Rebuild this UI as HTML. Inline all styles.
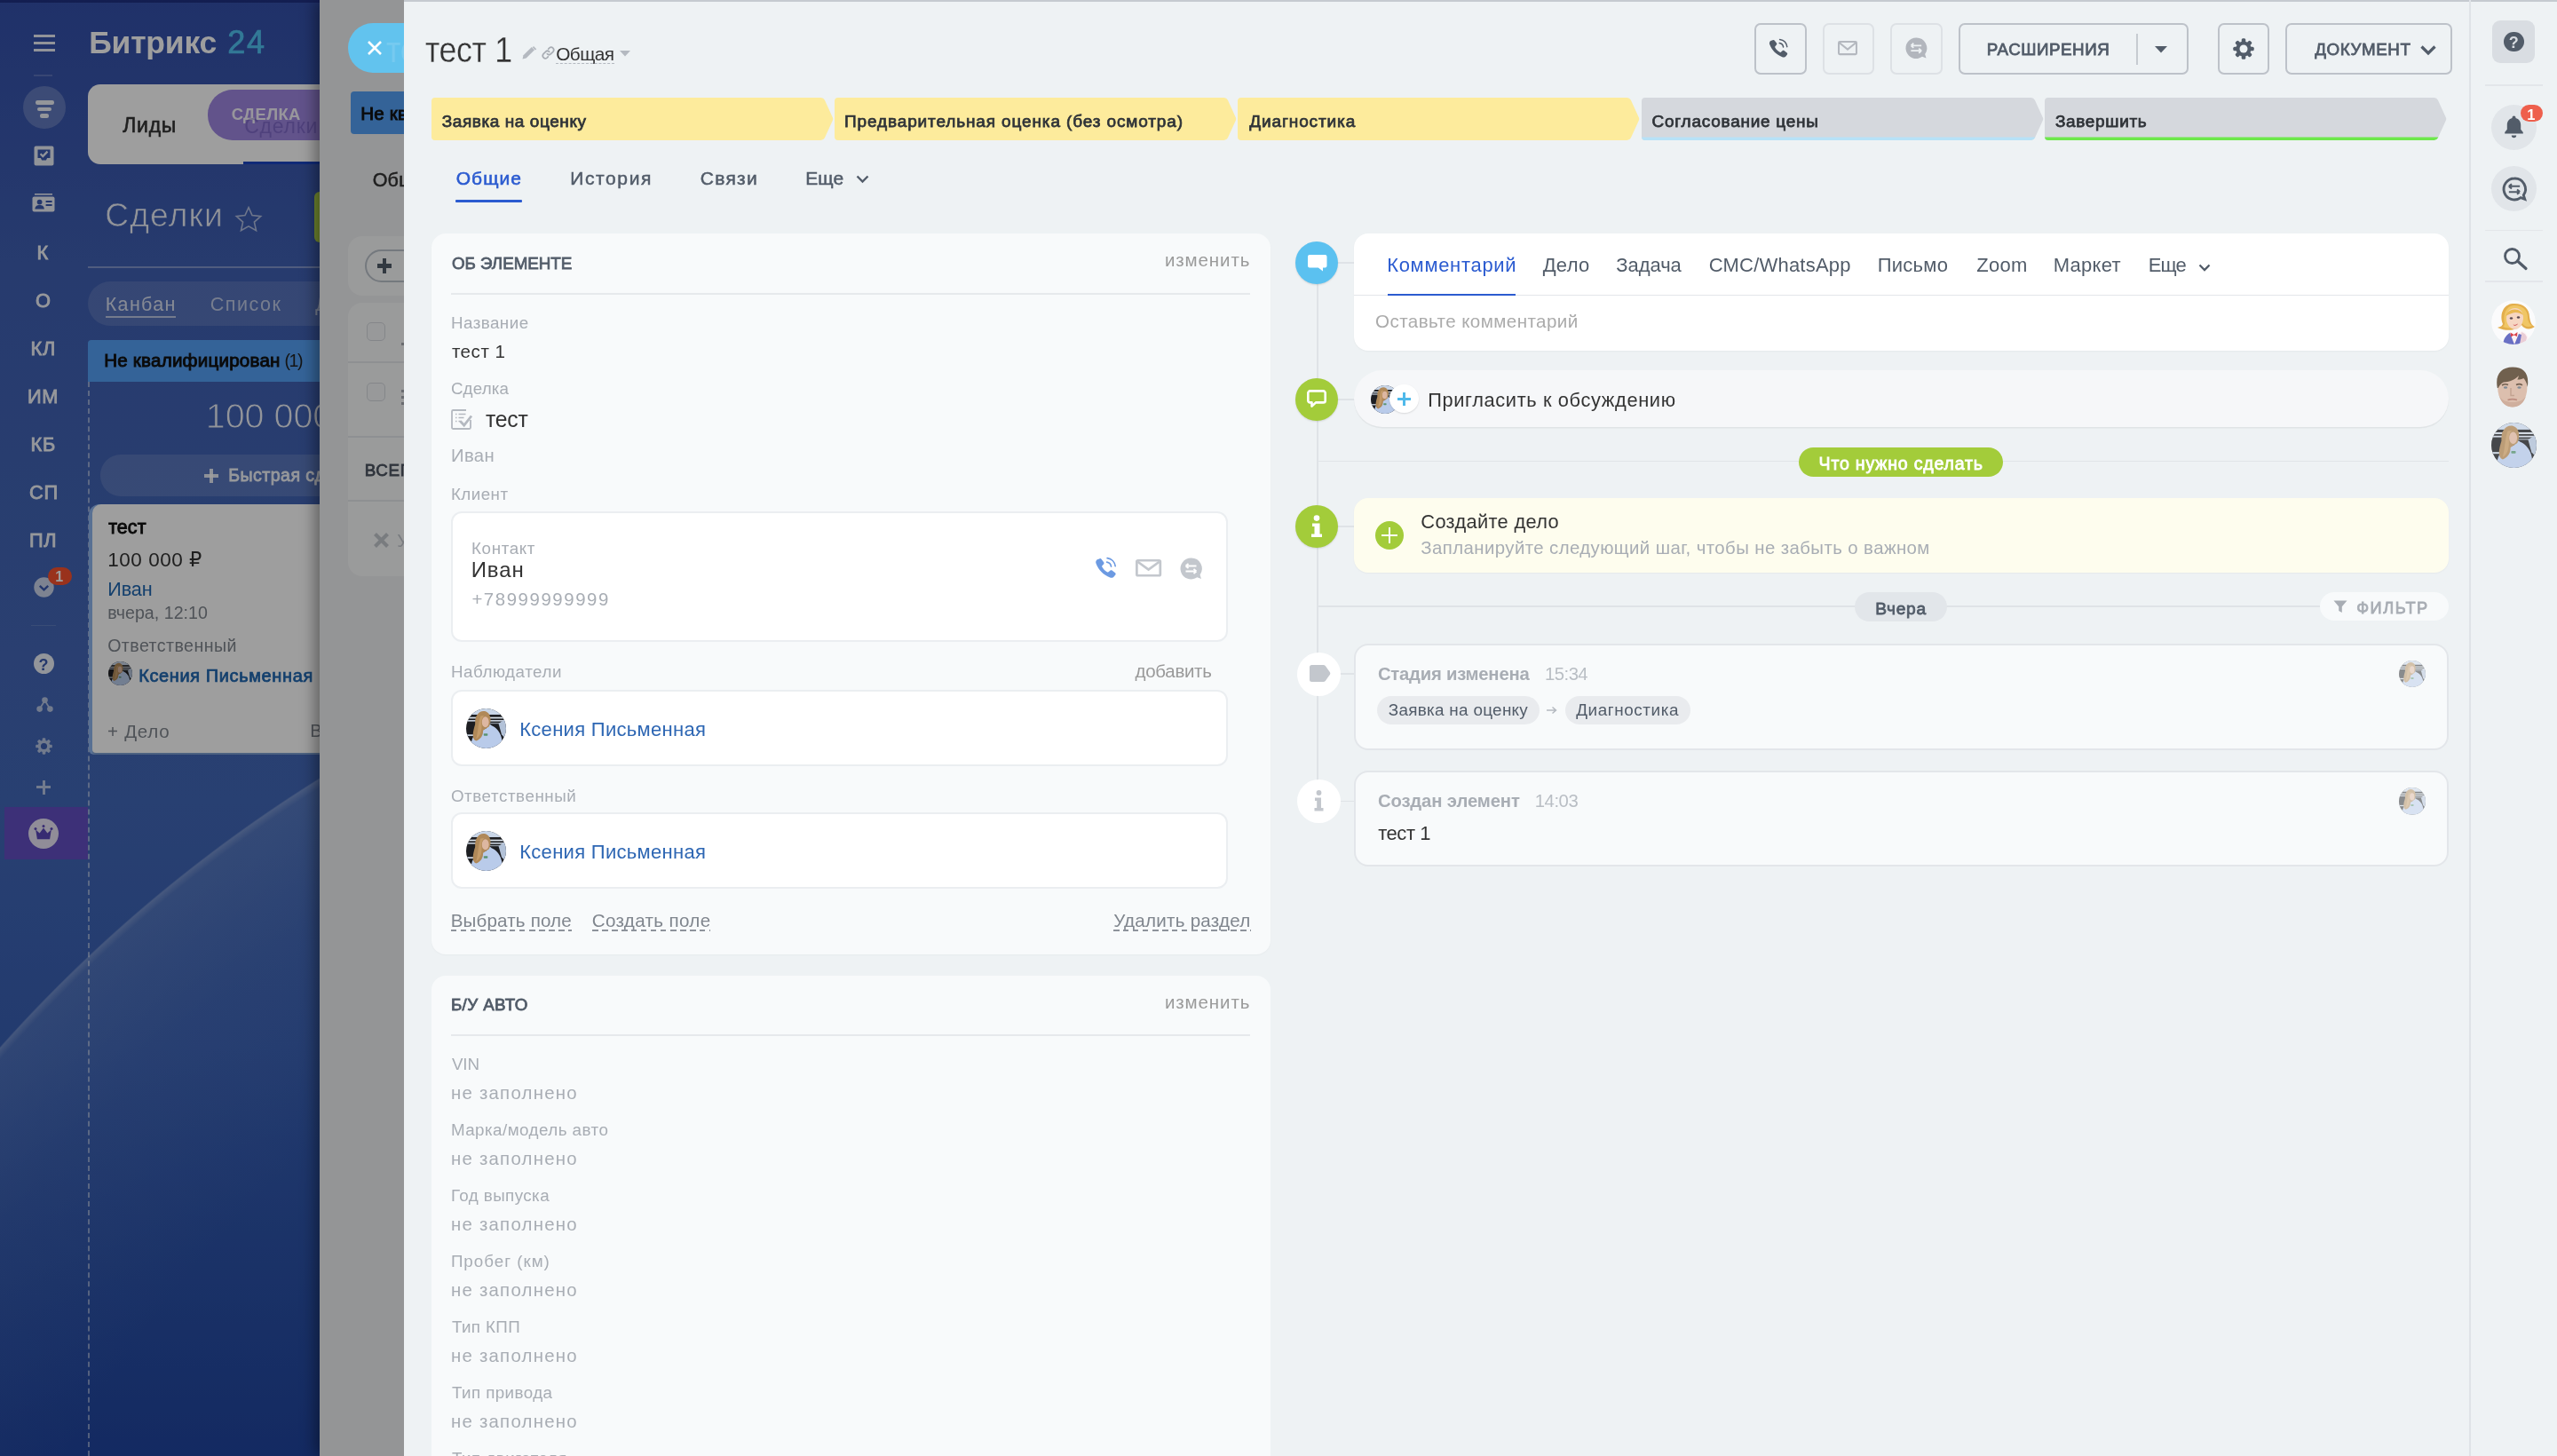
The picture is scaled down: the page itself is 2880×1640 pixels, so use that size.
<!DOCTYPE html>
<html lang="ru"><head><meta charset="utf-8"><title>тест 1</title>
<style>
html,body{margin:0;padding:0}
body{width:2880px;height:1640px;overflow:hidden;position:relative;background:#eef2f4;font-family:"Liberation Sans",sans-serif;}
#r{position:absolute;left:0;top:0;width:2880px;height:1640px;overflow:hidden;will-change:transform}
.a{position:absolute;display:block}
.t{position:absolute;white-space:nowrap;line-height:1;display:block}
svg{overflow:visible}
</style></head>
<body>
<div id="r">
<div class="a" style="left:0px;top:0px;width:470px;height:1640px;background:linear-gradient(180deg,#3450aa 0%,#3f5fb2 18%,#4467b6 45%,#4268b8 55%,#385fb3 72%,#2a50a6 88%,#20449e 100%);"></div>
<div class="a" style="left:-422px;top:625px;width:3318px;height:3318px;border-radius:50%;background:radial-gradient(circle closest-side,rgba(120,150,210,0) 0,rgba(120,150,210,0) 80%,rgba(140,165,215,.10) 92%,rgba(150,175,220,.22) 99.4%,rgba(190,205,235,.40) 99.9%,rgba(190,205,235,0) 100%)"></div>
<div class="a" style="left:38px;top:39px;width:24px;height:3px;background:rgba(255,255,255,.9);"></div>
<div class="a" style="left:38px;top:47px;width:24px;height:3px;background:rgba(255,255,255,.9);"></div>
<div class="a" style="left:38px;top:54.5px;width:24px;height:3px;background:rgba(255,255,255,.9);"></div>
<div class="a" style="left:38px;top:84px;width:21px;height:2px;background:rgba(255,255,255,.18);"></div>
<span class="t" style="left:100.2px;top:30.6px;font-size:35.5px;font-weight:700;color:#fff;letter-spacing:-0.20px;">Битрикс</span>
<span class="t" style="left:256.2px;top:30.2px;font-size:36px;color:#52c3f3;letter-spacing:1.80px;-webkit-text-stroke:.7px #52c3f3;">24</span>
<div class="a" style="left:26px;top:97px;width:48px;height:48px;background:rgba(255,255,255,.21);border-radius:24px;"></div>
<div class="a" style="left:39.5px;top:113.2px;width:21.5px;height:4.4px;background:rgba(255,255,255,.9);border-radius:2.2px;"></div>
<div class="a" style="left:42.3px;top:120.8px;width:15.8px;height:4.4px;background:rgba(255,255,255,.9);border-radius:2.2px;"></div>
<div class="a" style="left:45.3px;top:128.2px;width:9.6px;height:4.4px;background:rgba(255,255,255,.9);border-radius:2.2px;"></div>
<svg class="a" style="left:38px;top:164px;" width="23" height="23" viewBox="0 0 23 23"><path d="M2.5 0.5h18a2 2 0 0 1 2 2v18a2 2 0 0 1-2 2h-18a2 2 0 0 1-2-2v-18a2 2 0 0 1 2-2z" fill="rgba(255,255,255,.9)"/><path d="M4.5 4.5h14v9.5h-3.4l-1.2 2.6h-4.8l-1.2-2.6H4.5z" fill="#3b5aae"/><path d="M7.6 9.3l2.7 2.7 5.2-5.4" fill="none" stroke="rgba(255,255,255,.9)" stroke-width="2.3"/></svg>
<svg class="a" style="left:36px;top:218px;" width="26" height="21" viewBox="0 0 26 21"><rect x="3" y="0" width="20" height="1.6" fill="rgba(255,255,255,.9)"/><rect x="0.5" y="3.4" width="25" height="17" rx="2" fill="rgba(255,255,255,.9)"/><circle cx="8.6" cy="9.6" r="2.9" fill="#3b5aae"/><path d="M3.4 17.6c0-3.2 2.3-4.6 5.2-4.6s5.2 1.4 5.2 4.6z" fill="#3b5aae"/><rect x="15.6" y="8" width="7" height="2" fill="#3b5aae"/><rect x="15.6" y="12" width="7" height="2" fill="#3b5aae"/></svg>
<span class="t" style="left:41.6px;top:273.7px;font-size:21.8px;color:rgba(255,255,255,.9);letter-spacing:.6px;-webkit-text-stroke:.8px rgba(255,255,255,.9);">К</span>
<span class="t" style="left:40.1px;top:327.7px;font-size:21.8px;color:rgba(255,255,255,.9);letter-spacing:.6px;-webkit-text-stroke:.8px rgba(255,255,255,.9);">О</span>
<span class="t" style="left:34.6px;top:381.7px;font-size:21.8px;color:rgba(255,255,255,.9);letter-spacing:.6px;-webkit-text-stroke:.8px rgba(255,255,255,.9);">КЛ</span>
<span class="t" style="left:31.1px;top:435.9px;font-size:21.8px;color:rgba(255,255,255,.9);letter-spacing:.6px;-webkit-text-stroke:.8px rgba(255,255,255,.9);">ИМ</span>
<span class="t" style="left:34.6px;top:490.0px;font-size:21.8px;color:rgba(255,255,255,.9);letter-spacing:.6px;-webkit-text-stroke:.8px rgba(255,255,255,.9);">КБ</span>
<span class="t" style="left:33.1px;top:544.3px;font-size:21.8px;color:rgba(255,255,255,.9);letter-spacing:.6px;-webkit-text-stroke:.8px rgba(255,255,255,.9);">СП</span>
<span class="t" style="left:33.1px;top:597.8px;font-size:21.8px;color:rgba(255,255,255,.9);letter-spacing:.6px;-webkit-text-stroke:.8px rgba(255,255,255,.9);">ПЛ</span>
<svg class="a" style="left:38px;top:650px;" width="23" height="23" viewBox="0 0 23 23"><circle cx="11.5" cy="11.5" r="11.2" fill="rgba(255,255,255,.72)"/><path d="M6.8 9.8l4.7 4.6 4.7-4.6" fill="none" stroke="#3b5aae" stroke-width="2.4"/></svg>
<div class="a" style="left:54px;top:639px;width:27px;height:19.5px;background:#f7522e;border-radius:10px;"></div>
<span class="t" style="left:62.3px;top:642.2px;font-size:16px;font-weight:700;color:#fff;">1</span>
<div class="a" style="left:35px;top:703.5px;width:28px;height:1.5px;background:rgba(255,255,255,.14);"></div>
<div class="a" style="left:37.5px;top:735.5px;width:23px;height:23px;background:rgba(255,255,255,.9);border-radius:12px;"></div>
<span class="t" style="left:43.5px;top:740.0px;font-size:18px;font-weight:700;color:#3b5aae;">?</span>
<svg class="a" style="left:41px;top:785px;opacity:.62;" width="19" height="18" viewBox="0 0 19 18"><g fill="#fff"><circle cx="9.5" cy="3.6" r="3.3"/><circle cx="3.6" cy="13.6" r="3.3"/><circle cx="15.4" cy="13.6" r="3.3"/></g><path d="M9.5 4l-5.9 9.6M9.5 4l5.9 9.6" stroke="#fff" stroke-width="1.8"/></svg>
<svg class="a" style="left:40px;top:831px;opacity:.62;" width="19" height="19" viewBox="0 0 24 24"><rect x="9.7" y="0.3" width="4.6" height="23.4" rx="1.5" fill="#fff" transform="rotate(0 12 12)"/><rect x="9.7" y="0.3" width="4.6" height="23.4" rx="1.5" fill="#fff" transform="rotate(45 12 12)"/><rect x="9.7" y="0.3" width="4.6" height="23.4" rx="1.5" fill="#fff" transform="rotate(90 12 12)"/><rect x="9.7" y="0.3" width="4.6" height="23.4" rx="1.5" fill="#fff" transform="rotate(135 12 12)"/><circle cx="12" cy="12" r="8.6" fill="#fff"/><circle cx="12" cy="12" r="4.5" fill="#3b5aae"/></svg>
<div class="a" style="left:41px;top:885px;width:16px;height:3px;background:rgba(255,255,255,.62);"></div>
<div class="a" style="left:47.5px;top:878.5px;width:3px;height:6.5px;background:rgba(255,255,255,.62);"></div>
<div class="a" style="left:47.5px;top:888px;width:3px;height:6.5px;background:rgba(255,255,255,.62);"></div>
<div class="a" style="left:5px;top:908.5px;width:94px;height:59px;background:#634ec2;"></div>
<svg class="a" style="left:32px;top:922px;" width="34" height="34" viewBox="0 0 34 34"><circle cx="17" cy="17" r="17" fill="rgba(255,255,255,.85)"/><path d="M8.2 12.6l4.4 4 4.4-6.2 4.4 6.2 4.4-4-1.7 10.6H9.9z" fill="#5a46b8"/><circle cx="8" cy="11.4" r="1.5" fill="#5a46b8"/><circle cx="17" cy="8.6" r="1.5" fill="#5a46b8"/><circle cx="26" cy="11.4" r="1.5" fill="#5a46b8"/></svg>
<div class="a" style="left:99px;top:430px;width:0;height:1210px;border-left:2px dashed rgba(255,255,255,.45)"></div>
<div class="a" style="left:99px;top:95px;width:300px;height:89.5px;background:#fff;border-radius:14px 0 0 14px;"></div>
<span class="t" style="left:138.2px;top:130.4px;font-size:23px;color:#333;letter-spacing:0.77px;-webkit-text-stroke:.6px #333;">Лиды</span>
<div class="a" style="left:234px;top:101px;width:200px;height:56.8px;background:#9e86e0;border-radius:28px 0 0 28px;"></div>
<span class="t" style="left:260.7px;top:120.2px;font-size:18.4px;font-weight:700;color:rgba(255,255,255,.9);letter-spacing:0.36px;">СДЕЛКА</span>
<span class="t" style="left:275.2px;top:130.7px;font-size:23px;color:rgba(60,40,150,.3);letter-spacing:0.76px;">Сделки</span>
<div class="a" style="left:274px;top:182px;width:100px;height:3px;background:#1a45c0;"></div>
<span class="t" style="left:118.2px;top:224.4px;font-size:37.2px;color:rgba(255,255,255,.9);letter-spacing:1.16px;-webkit-text-stroke:.7px #3c5db1;">Сделки</span>
<svg class="a" style="left:264px;top:231px;" width="32" height="31" viewBox="0 0 32 31"><path d="M16 2.6l4 9 9.7 1-7.3 6.5 2.1 9.6L16 23.8l-8.5 4.9 2.1-9.6L2.3 12.6l9.7-1z" fill="none" stroke="rgba(255,255,255,.6)" stroke-width="1.6"/></svg>
<div class="a" style="left:354px;top:215.5px;width:40px;height:57px;background:#b5d94c;border-radius:6px 0 0 6px;"></div>
<div class="a" style="left:99px;top:300px;width:300px;height:2px;background:rgba(255,255,255,.35);"></div>
<div class="a" style="left:99px;top:316.5px;width:330px;height:50px;background:rgba(255,255,255,.12);border-radius:25px 0 0 25px;"></div>
<span class="t" style="left:118.7px;top:333.0px;font-size:21.5px;color:rgba(255,255,255,.78);letter-spacing:1.36px;">Канбан</span>
<div class="a" style="left:119px;top:356px;width:78.5px;height:2px;background:rgba(255,255,255,.6);"></div>
<span class="t" style="left:236.7px;top:333.0px;font-size:21.5px;color:rgba(255,255,255,.62);letter-spacing:1.56px;">Список</span>
<span class="t" style="left:355.2px;top:333.0px;font-size:21.5px;color:rgba(255,255,255,.62);">Д</span>
<div class="a" style="left:99px;top:382.5px;width:300px;height:47.5px;background:#55a1f5;border-radius:4px 0 0 0;"></div>
<span class="t" style="left:117.2px;top:396.0px;font-size:20.6px;color:#111;letter-spacing:0.21px;-webkit-text-stroke:.9px #111;">Не квалифицирован</span>
<span class="t" style="left:320.4px;top:396.8px;font-size:19.6px;color:#222;letter-spacing:-1.40px;">(1)</span>
<span class="t" style="left:231.7px;top:449.0px;font-size:39.5px;color:rgba(255,255,255,.9);letter-spacing:-0.03px;-webkit-text-stroke:1px #4162b2;">100 000</span>
<div class="a" style="left:113px;top:512px;width:320px;height:46.5px;background:rgba(255,255,255,.13);border-radius:23px 0 0 23px;"></div>
<div class="a" style="left:229.5px;top:534px;width:16.5px;height:3.6px;background:rgba(255,255,255,.85);"></div>
<div class="a" style="left:236px;top:527.5px;width:3.6px;height:16.5px;background:rgba(255,255,255,.85);"></div>
<span class="t" style="left:257.2px;top:525.9px;font-size:19.6px;color:rgba(255,255,255,.86);letter-spacing:0.45px;-webkit-text-stroke:.8px rgba(255,255,255,.86);">Быстрая сделка</span>
<div class="a" style="left:100px;top:568px;width:300px;height:282px;background:#8fb5ee;border-radius:12px 0 0 6px;"></div>
<div class="a" style="left:103.6px;top:568px;width:300px;height:280px;background:#fff;border-radius:10px 0 0 4px;box-shadow:0 2px 0 rgba(0,0,0,.12);"></div>
<span class="t" style="left:122.2px;top:583.6px;font-size:21.4px;color:#111;letter-spacing:0.10px;-webkit-text-stroke:.9px #111;">тест</span>
<span class="t" style="left:121.2px;top:620.3px;font-size:22.5px;color:#333;letter-spacing:0.54px;font-family:'Liberation Sans','DejaVu Sans',sans-serif;">100 000 ₽</span>
<span class="t" style="left:121.2px;top:652.8px;font-size:21.6px;color:#2067b0;letter-spacing:-0.07px;">Иван</span>
<span class="t" style="left:121.2px;top:680.7px;font-size:19.6px;color:#80868e;letter-spacing:0.03px;">вчера, 12:10</span>
<span class="t" style="left:121.2px;top:717.9px;font-size:19.6px;color:#80868e;letter-spacing:0.44px;">Ответственный</span>
<svg class="a" style="left:122px;top:745px;border-radius:50%;overflow:hidden;" width="27" height="27" viewBox="0 0 40 40"><rect width="40" height="40" fill="#1d1e22"/><rect x="0" y="0" width="40" height="6.2" fill="#c9d6e8"/><rect x="0" y="8.6" width="40" height="1.5" fill="#dde5ee"/><rect x="0" y="11.6" width="40" height="1.4" fill="#cfd8e4"/><rect x="22" y="14.2" width="18" height="1.1" fill="#8c949f"/><path d="M32.500 15L40 10v21l-4.500-5z" fill="#b3c2d8"/><rect x="0" y="26" width="8" height="1.600" fill="#cbd5e2"/><path d="M4.500 40C5 30 8 24.500 14 22.500l6-2.500c1.500-4 4-5 5.500-3 5 2 9.500 7 10.500 15l1 8z" fill="#b9cbea"/><path d="M11 6.500C14 1.200 22 1.200 24 8c1 4 .2 7-1 10l-6 4c0 5-2 8.500-7 10.500-5-2-3-10-1-16.500 0-4 0-7 2-9.500z" fill="#b08959"/><ellipse cx="19.300" cy="13.600" rx="3.500" ry="5.300" fill="#ddb7a1"/><path d="M14.500 7.500C12 14 12.500 21 10 30.500c4-2 6-8 5.500-14.500-.4-4 .6-7 2.600-9z" fill="#c49b69"/><rect x="17.600" y="25" width="4" height="2.300" rx=".6" fill="#5a9372"/></svg>
<span class="t" style="left:156.2px;top:750.8px;font-size:20px;color:#2067b0;letter-spacing:0.61px;-webkit-text-stroke:.7px #2067b0;">Ксения Письменная</span>
<span class="t" style="left:121.0px;top:813.8px;font-size:20.5px;color:#80868e;letter-spacing:0.76px;">+ Дело</span>
<span class="t" style="left:349.2px;top:813.4px;font-size:20.5px;color:#80868e;">В</span>
<div class="a" style="left:360px;top:0px;width:200px;height:1640px;background:#eff0f2;box-shadow:-5px 0 16px rgba(0,0,0,.4);"></div>
<div class="a" style="left:395.3px;top:103.4px;width:100px;height:47.2px;background:#55a1f5;border-radius:4px 0 0 4px;"></div>
<span class="t" style="left:406.2px;top:117.9px;font-size:20.6px;color:#111;letter-spacing:0.21px;-webkit-text-stroke:.9px #111;">Не квалифицирован</span>
<span class="t" style="left:419.7px;top:192.5px;font-size:21.5px;color:#333;letter-spacing:0.20px;-webkit-text-stroke:.5px #333;">Общие</span>
<div class="a" style="left:392px;top:265.5px;width:100px;height:67.5px;background:#f9fafb;border-radius:16px 0 0 16px;"></div>
<div class="a" style="left:410.5px;top:280.5px;width:100px;height:37.5px;border-radius:19px 0 0 19px;border:2px solid #bcc3cb;box-sizing:border-box;"></div>
<div class="a" style="left:424.6px;top:297.3px;width:16.8px;height:4.4px;background:#525c69;"></div>
<div class="a" style="left:430.8px;top:291.1px;width:4.4px;height:16.8px;background:#525c69;"></div>
<div class="a" style="left:392px;top:341.3px;width:100px;height:308px;background:#f9fafb;border-radius:16px 0 0 16px;"></div>
<div class="a" style="left:392px;top:407px;width:100px;height:2px;background:#e6e9ec;"></div>
<div class="a" style="left:392px;top:490.5px;width:100px;height:2px;background:#e6e9ec;"></div>
<div class="a" style="left:392px;top:563px;width:100px;height:2px;background:#e6e9ec;"></div>
<div class="a" style="left:413px;top:363px;width:21px;height:21px;background:#f6f7f8;border-radius:5px;border:1.6px solid #d5d9de;box-sizing:border-box;"></div>
<div class="a" style="left:413px;top:431px;width:21px;height:21px;background:#f6f7f8;border-radius:5px;border:1.6px solid #d5d9de;box-sizing:border-box;"></div>
<span class="t" style="left:410.7px;top:520.8px;font-size:18.8px;color:#4c5461;letter-spacing:0.70px;-webkit-text-stroke:.8px #4c5461;">ВСЕГО</span>
<svg class="a" style="left:420px;top:598.5px;" width="19" height="19" viewBox="0 0 19 19"><path d="M2.5 2.5l14 14M16.5 2.5l-14 14" stroke="#c3c8ce" stroke-width="4.2"/></svg>
<span class="t" style="left:447.2px;top:598.8px;font-size:20px;color:#c3c8ce;">У</span>
<div class="a" style="left:452px;top:386px;width:3px;height:3px;background:#a8adb4;"></div>
<div class="a" style="left:452px;top:439px;width:3px;height:3px;background:#a8adb4;"></div>
<div class="a" style="left:452px;top:446px;width:3px;height:3px;background:#a8adb4;"></div>
<div class="a" style="left:452px;top:453px;width:3px;height:3px;background:#a8adb4;"></div>
<div class="a" style="left:0px;top:0px;width:470px;height:1640px;background:rgba(0,0,0,.38);"></div>
<div class="a" style="left:0px;top:0px;width:360px;height:3px;background:rgba(10,15,60,.55);"></div>
<div class="a" style="left:392px;top:26.3px;width:80px;height:55.6px;background:#62c3ee;border-radius:28px 0 0 28px;"></div>
<svg class="a" style="left:411.5px;top:43.5px;" width="20" height="20" viewBox="0 0 20 20"><path d="M3 3l14 14M17 3l-14 14" stroke="#fff" stroke-width="2.6"/></svg>
<span class="t" style="left:435.2px;top:35.1px;font-size:41.5px;color:rgba(255,255,255,.13);transform:scaleX(0.86);transform-origin:0 0;">тест 1</span>
<div class="a" style="left:455px;top:0px;width:2425px;height:1640px;background:#eef2f4;"></div>
<div class="a" style="left:455px;top:0px;width:2425px;height:2px;background:#c5cad0;"></div>
<span class="t" style="left:479.4px;top:35.1px;font-size:41.5px;color:#333;letter-spacing:-0.40px;transform:scaleX(0.86);transform-origin:0 0;-webkit-text-stroke:.3px #eef2f4;">тест 1</span>
<svg class="a" style="left:587px;top:51px;" width="17" height="17" viewBox="0 0 17 17"><path d="M1.500 15.500l1-4.200L11.800 2l3.200 3.200-9.300 9.300z" fill="#b4b9c0"/><path d="M12.800 1l1.200-1.200 3.200 3.200L16 4.200z" fill="#b4b9c0" transform="translate(0,1.2)"/></svg>
<svg class="a" style="left:610px;top:52px;" width="15" height="15" viewBox="0 0 15 15"><g fill="none" stroke="#a8adb4" stroke-width="1.700" stroke-linecap="round"><path d="M6.300 8.700a3 3 0 0 0 4.200 0l2.600-2.600a3 3 0 0 0-4.200-4.200L7.700 3.100"/><path d="M8.700 6.300a3 3 0 0 0-4.200 0L1.900 8.900a3 3 0 0 0 4.200 4.200l1.200-1.200"/></g></svg>
<span class="t" style="left:626.2px;top:50.7px;font-size:20.8px;color:#333;letter-spacing:-0.55px;">Общая</span>
<div class="a" style="left:626px;top:71px;width:66px;height:0;border-top:1.500px dashed #b4b9c0"></div>
<svg class="a" style="left:698px;top:57px;" width="12" height="7" viewBox="0 0 12 7"><path d="M0 0h12l-6 6.500z" fill="#b4b9c0"/></svg>
<div class="a" style="left:1976px;top:26.3px;width:58.5px;height:57.6px;border-radius:7px;border:2px solid #bdc2c9;box-sizing:border-box;"></div>
<svg class="a" style="left:1990px;top:43px;" width="24" height="24" viewBox="0 0 24 24"><path d="M6.6 2.2c.6-.5 1.5-.4 2 .2l2.4 3.2c.5.6.4 1.4-.1 2L9.400 9.300c-.3.3-.3.700-.1 1.100 1.300 2.300 3.100 4.100 5.400 5.400.4.200.8.200 1.100-.1l1.700-1.500c.6-.5 1.400-.6 2-.1l3.200 2.400c.6.500.7 1.400.2 2l-1.300 1.700c-1 1.300-2.700 1.700-4.200 1.100C10.700 18.700 5.800 13.800 3.200 7.100c-.6-1.500-.2-3.200 1.100-4.200z" fill="#525c69"/><path d="M14.2 5.600c2.300.4 4 2.100 4.400 4.400" fill="none" stroke="#525c69" stroke-width="1.5" stroke-linecap="round"/><path d="M14.600 1.500c4.300.6 7.600 3.900 8.200 8.200" fill="none" stroke="#525c69" stroke-width="1.5" stroke-linecap="round"/></svg>
<div class="a" style="left:2053px;top:26.3px;width:57.6px;height:57.6px;border-radius:7px;border:2px solid #dde1e5;box-sizing:border-box;"></div>
<svg class="a" style="left:2070px;top:46px;" width="22" height="16.2" viewBox="0 0 30 22"><rect x="1.4" y="1.400" width="27.2" height="19.2" rx="1.5" fill="none" stroke="#b4b8bf" stroke-width="2.8"/><path d="M2.5 3l12.500 10L27.500 3" fill="none" stroke="#b4b8bf" stroke-width="2.800"/></svg>
<div class="a" style="left:2129.4px;top:26.3px;width:58.2px;height:57.6px;border-radius:7px;border:2px solid #dde1e5;box-sizing:border-box;"></div>
<svg class="a" style="left:2145.6px;top:42.2px;" width="24.5" height="24.5" viewBox="0 0 25 25"><path d="M12.500 0.500a12 12 0 1 0 6.900 21.800l4.600 1.600-1.400-4.500A12 12 0 0 0 12.500 .5z" fill="#b2b6bd"/><path d="M6.500 9.500h12M6.500 9.500l3-2.600M6.500 9.500l3 2.600M18.500 15.500h-12M18.500 15.500l-3-2.600M18.500 15.500l-3 2.600" stroke="#eef2f4" stroke-width="1.800" fill="none"/></svg>
<div class="a" style="left:2206.4px;top:26.3px;width:258.3px;height:57.6px;border-radius:7px;border:2px solid #bdc2c9;box-sizing:border-box;"></div>
<span class="t" style="left:2237.7px;top:47.0px;font-size:18.8px;color:#525c69;letter-spacing:0.53px;-webkit-text-stroke:.8px #525c69;">РАСШИРЕНИЯ</span>
<div class="a" style="left:2406px;top:38px;width:2px;height:34.6px;background:#c6cbd1;"></div>
<svg class="a" style="left:2427px;top:51.5px;" width="14" height="7.5" viewBox="0 0 14 7.5"><path d="M0 0h14l-7 7.500z" fill="#525c69"/></svg>
<div class="a" style="left:2498px;top:26.3px;width:57.7px;height:57.6px;border-radius:7px;border:2px solid #bdc2c9;box-sizing:border-box;"></div>
<svg class="a" style="left:2515.2px;top:43px;" width="24" height="24" viewBox="0 0 24 24"><rect x="9.7" y="0.3" width="4.6" height="23.4" rx="1.5" fill="#525c69" transform="rotate(0 12 12)"/><rect x="9.7" y="0.3" width="4.6" height="23.4" rx="1.5" fill="#525c69" transform="rotate(45 12 12)"/><rect x="9.7" y="0.3" width="4.6" height="23.4" rx="1.5" fill="#525c69" transform="rotate(90 12 12)"/><rect x="9.7" y="0.3" width="4.6" height="23.4" rx="1.5" fill="#525c69" transform="rotate(135 12 12)"/><circle cx="12" cy="12" r="8.6" fill="#525c69"/><circle cx="12" cy="12" r="4.5" fill="#eef2f4"/></svg>
<div class="a" style="left:2574.2px;top:26.3px;width:187.6px;height:57.6px;border-radius:7px;border:2px solid #bdc2c9;box-sizing:border-box;"></div>
<span class="t" style="left:2607.2px;top:47.0px;font-size:18.8px;color:#525c69;letter-spacing:0.59px;-webkit-text-stroke:.8px #525c69;">ДОКУМЕНТ</span>
<svg class="a" style="left:2726px;top:51px;" width="18" height="11" viewBox="0 0 18 11"><path d="M1.500 1.500l7.500 7.500 7.500-7.500" fill="none" stroke="#525c69" stroke-width="3.300"/></svg>
<svg class="a" style="left:485.8px;top:110px;" width="455" height="48" viewBox="0 0 455 48"><path d="M4 0H438.500a5 5 0 0 1 4.400 2.700L451.800 22.300a3.600 3.600 0 0 1 0 3.400L442.900 45.300a5 5 0 0 1-4.400 2.700H4a4 4 0 0 1-4-4V4a4 4 0 0 1 4-4z" fill="#fdeb9c"/></svg>
<span class="t" style="left:497.7px;top:126.8px;font-size:19px;color:#2f3338;letter-spacing:0.58px;-webkit-text-stroke:.75px #2f3338;">Заявка на оценку</span>
<svg class="a" style="left:940.1px;top:110px;" width="455" height="48" viewBox="0 0 455 48"><path d="M4 0H438.500a5 5 0 0 1 4.400 2.700L451.800 22.300a3.600 3.600 0 0 1 0 3.400L442.900 45.300a5 5 0 0 1-4.400 2.700H4a4 4 0 0 1-4-4V4a4 4 0 0 1 4-4z" fill="#fdeb9c"/></svg>
<span class="t" style="left:951.0px;top:126.8px;font-size:19px;color:#2f3338;letter-spacing:0.87px;-webkit-text-stroke:.75px #2f3338;">Предварительная оценка (без осмотра)</span>
<svg class="a" style="left:1394.4px;top:110px;" width="455" height="48" viewBox="0 0 455 48"><path d="M4 0H438.500a5 5 0 0 1 4.400 2.700L451.800 22.300a3.600 3.600 0 0 1 0 3.400L442.900 45.300a5 5 0 0 1-4.400 2.700H4a4 4 0 0 1-4-4V4a4 4 0 0 1 4-4z" fill="#fdeb9c"/></svg>
<span class="t" style="left:1407.3px;top:126.8px;font-size:19px;color:#2f3338;letter-spacing:0.88px;-webkit-text-stroke:.75px #2f3338;">Диагностика</span>
<svg class="a" style="left:1848.7px;top:110px;" width="455" height="48" viewBox="0 0 455 48"><path d="M4 0H438.500a5 5 0 0 1 4.400 2.700L451.800 22.300a3.600 3.600 0 0 1 0 3.400L442.900 45.300a5 5 0 0 1-4.400 2.700H4a4 4 0 0 1-4-4V4a4 4 0 0 1 4-4z" fill="#d5d8dd"/><path d="M0 44.500h443.300l-.4.800a5 5 0 0 1-4.400 2.700H4a4 4 0 0 1-4-3.500z" fill="#b7e2f7"/></svg>
<span class="t" style="left:1860.6px;top:126.8px;font-size:19px;color:#2f3338;letter-spacing:0.74px;-webkit-text-stroke:.75px #2f3338;">Согласование цены</span>
<svg class="a" style="left:2303.0px;top:110px;" width="455" height="48" viewBox="0 0 455 48"><path d="M4 0H438.500a5 5 0 0 1 4.400 2.700L451.800 22.300a3.600 3.600 0 0 1 0 3.400L442.900 45.300a5 5 0 0 1-4.400 2.700H4a4 4 0 0 1-4-4V4a4 4 0 0 1 4-4z" fill="#d5d8dd"/><path d="M0 44.500h443.300l-.4.800a5 5 0 0 1-4.400 2.700H4a4 4 0 0 1-4-3.500z" fill="#6de84b"/></svg>
<span class="t" style="left:2314.9px;top:126.8px;font-size:19px;color:#2f3338;letter-spacing:0.66px;-webkit-text-stroke:.75px #2f3338;">Завершить</span>
<span class="t" style="left:513.7px;top:189.6px;font-size:21px;color:#2b5bd0;letter-spacing:1.07px;-webkit-text-stroke:.6px #2b5bd0;">Общие</span>
<div class="a" style="left:513px;top:224.5px;width:75px;height:3.5px;background:#2b5bd0;border-radius:1px;"></div>
<span class="t" style="left:642.2px;top:189.6px;font-size:21px;color:#525c69;letter-spacing:1.63px;-webkit-text-stroke:.5px #525c69;">История</span>
<span class="t" style="left:788.7px;top:189.6px;font-size:21px;color:#525c69;letter-spacing:1.32px;-webkit-text-stroke:.5px #525c69;">Связи</span>
<span class="t" style="left:907.2px;top:189.6px;font-size:21px;color:#525c69;letter-spacing:0.15px;-webkit-text-stroke:.5px #525c69;">Еще</span>
<svg class="a" style="left:964px;top:197px;" width="15" height="10" viewBox="0 0 15 10"><path d="M1.500 1.500l6 6 6-6" fill="none" stroke="#525c69" stroke-width="2.400"/></svg>
<div class="a" style="left:486px;top:262.6px;width:945px;height:812px;background:#f8fafb;border-radius:16px;box-shadow:0 1px 2px rgba(0,0,0,.03);"></div>
<span class="t" style="left:508.9px;top:288.1px;font-size:18.8px;color:#525c69;letter-spacing:-0.02px;-webkit-text-stroke:.8px #525c69;">ОБ ЭЛЕМЕНТЕ</span>
<span class="t" style="left:1311.9px;top:283.2px;font-size:20.5px;color:#9a9a9a;letter-spacing:0.90px;">изменить</span>
<div class="a" style="left:508px;top:330px;width:900px;height:2px;background:#e6e9ec;"></div>
<span class="t" style="left:507.9px;top:355.0px;font-size:18.8px;color:#a8adb4;letter-spacing:0.47px;">Название</span>
<span class="t" style="left:508.9px;top:385.6px;font-size:20.6px;color:#333;letter-spacing:0.52px;">тест 1</span>
<span class="t" style="left:507.9px;top:428.6px;font-size:18.8px;color:#a8adb4;letter-spacing:0.16px;">Сделка</span>
<svg class="a" style="left:508px;top:460px;" width="24" height="24" viewBox="0 0 24 24"><path d="M22 13v8.500a1.500 1.500 0 0 1-1.500 1.500h-18A1.500 1.500 0 0 1 1 21.500v-18A1.500 1.500 0 0 1 2.500 2H17" fill="none" stroke="#b4b9c0" stroke-width="1.800"/><path d="M5 6.500h1.500M8.500 6.500h8M5 10.500h1.500M8.500 10.500h6M5 14.500h1.500M8.500 14.500h3" stroke="#b4b9c0" stroke-width="1.600"/><path d="M10.500 14.500l4.200 4.500L23 8.500" fill="none" stroke="#b4b9c0" stroke-width="2.800"/></svg>
<span class="t" style="left:546.8px;top:459.1px;font-size:26px;color:#333;letter-spacing:-0.23px;transform:scaleX(0.95);transform-origin:0 0;">тест</span>
<span class="t" style="left:507.9px;top:502.7px;font-size:20.3px;color:#a8adb4;letter-spacing:0.43px;">Иван</span>
<span class="t" style="left:507.9px;top:547.8px;font-size:18.8px;color:#a8adb4;letter-spacing:0.46px;">Клиент</span>
<div class="a" style="left:508.3px;top:575.8px;width:875px;height:147.6px;background:#fff;border-radius:12px;border:2px solid #ebeef1;box-sizing:border-box;"></div>
<span class="t" style="left:531.0px;top:609.0px;font-size:18.8px;color:#a8adb4;letter-spacing:0.63px;">Контакт</span>
<span class="t" style="left:530.7px;top:630.4px;font-size:24px;color:#333;letter-spacing:0.93px;">Иван</span>
<span class="t" style="left:531.4px;top:665.3px;font-size:20.4px;color:#a8adb4;letter-spacing:1.57px;">+78999999999</span>
<svg class="a" style="left:1230.5px;top:627px;" width="26.5" height="26.5" viewBox="0 0 24 24"><path d="M6.6 2.2c.6-.5 1.5-.4 2 .2l2.4 3.2c.5.6.4 1.4-.1 2L9.400 9.300c-.3.3-.3.700-.1 1.100 1.300 2.300 3.100 4.100 5.400 5.400.4.200.8.200 1.100-.1l1.700-1.500c.6-.5 1.400-.6 2-.1l3.200 2.400c.6.500.7 1.400.2 2l-1.300 1.700c-1 1.300-2.700 1.700-4.200 1.100C10.700 18.700 5.800 13.800 3.200 7.100c-.6-1.500-.2-3.200 1.100-4.200z" fill="#6c9ae2"/><path d="M14.2 5.600c2.300.4 4 2.100 4.400 4.400" fill="none" stroke="#6c9ae2" stroke-width="1.5" stroke-linecap="round"/><path d="M14.600 1.500c4.300.6 7.600 3.900 8.200 8.200" fill="none" stroke="#6c9ae2" stroke-width="1.5" stroke-linecap="round"/></svg>
<svg class="a" style="left:1279px;top:630px;" width="29.2" height="19.6" viewBox="0 0 30 22" preserveAspectRatio="none"><rect x="1.4" y="1.400" width="27.2" height="19.2" rx="1.5" fill="none" stroke="#c3c7cd" stroke-width="2.8"/><path d="M2.5 3l12.500 10L27.500 3" fill="none" stroke="#c3c7cd" stroke-width="2.800"/></svg>
<svg class="a" style="left:1329.4px;top:627.6px;" width="25" height="25" viewBox="0 0 25 25"><path d="M12.500 0.500a12 12 0 1 0 6.900 21.800l4.600 1.600-1.400-4.500A12 12 0 0 0 12.500 .5z" fill="#c3c7cd"/><path d="M6.500 9.500h12M6.500 9.500l3-2.600M6.500 9.500l3 2.600M18.500 15.500h-12M18.500 15.500l-3-2.600M18.500 15.500l-3 2.600" stroke="#fff" stroke-width="1.800" fill="none"/></svg>
<span class="t" style="left:507.9px;top:748.0px;font-size:18.8px;color:#a8adb4;letter-spacing:0.53px;">Наблюдатели</span>
<span class="t" style="left:1278.6px;top:746.2px;font-size:20.5px;color:#9a9a9a;letter-spacing:-0.31px;">добавить</span>
<div class="a" style="left:508.3px;top:776.7px;width:875px;height:86.5px;background:#fff;border-radius:12px;border:2px solid #ebeef1;box-sizing:border-box;"></div>
<svg class="a" style="left:525px;top:797.8px;border-radius:50%;overflow:hidden;" width="45" height="45" viewBox="0 0 40 40"><rect width="40" height="40" fill="#1d1e22"/><rect x="0" y="0" width="40" height="6.2" fill="#c9d6e8"/><rect x="0" y="8.6" width="40" height="1.5" fill="#dde5ee"/><rect x="0" y="11.6" width="40" height="1.4" fill="#cfd8e4"/><rect x="22" y="14.2" width="18" height="1.1" fill="#8c949f"/><path d="M32.500 15L40 10v21l-4.500-5z" fill="#b3c2d8"/><rect x="0" y="26" width="8" height="1.600" fill="#cbd5e2"/><path d="M4.500 40C5 30 8 24.500 14 22.500l6-2.500c1.500-4 4-5 5.500-3 5 2 9.500 7 10.500 15l1 8z" fill="#b9cbea"/><path d="M11 6.500C14 1.200 22 1.200 24 8c1 4 .2 7-1 10l-6 4c0 5-2 8.500-7 10.500-5-2-3-10-1-16.500 0-4 0-7 2-9.500z" fill="#b08959"/><ellipse cx="19.300" cy="13.600" rx="3.500" ry="5.300" fill="#ddb7a1"/><path d="M14.500 7.500C12 14 12.500 21 10 30.500c4-2 6-8 5.500-14.500-.4-4 .6-7 2.600-9z" fill="#c49b69"/><rect x="17.600" y="25" width="4" height="2.300" rx=".6" fill="#5a9372"/></svg>
<span class="t" style="left:585.2px;top:810.5px;font-size:22px;color:#2d66b3;letter-spacing:0.30px;">Ксения Письменная</span>
<span class="t" style="left:507.9px;top:888.0px;font-size:18.8px;color:#a8adb4;letter-spacing:0.57px;">Ответственный</span>
<div class="a" style="left:508.3px;top:914.7px;width:875px;height:86.5px;background:#fff;border-radius:12px;border:2px solid #ebeef1;box-sizing:border-box;"></div>
<svg class="a" style="left:525px;top:935.8px;border-radius:50%;overflow:hidden;" width="45" height="45" viewBox="0 0 40 40"><rect width="40" height="40" fill="#1d1e22"/><rect x="0" y="0" width="40" height="6.2" fill="#c9d6e8"/><rect x="0" y="8.6" width="40" height="1.5" fill="#dde5ee"/><rect x="0" y="11.6" width="40" height="1.4" fill="#cfd8e4"/><rect x="22" y="14.2" width="18" height="1.1" fill="#8c949f"/><path d="M32.500 15L40 10v21l-4.500-5z" fill="#b3c2d8"/><rect x="0" y="26" width="8" height="1.600" fill="#cbd5e2"/><path d="M4.500 40C5 30 8 24.500 14 22.500l6-2.500c1.500-4 4-5 5.500-3 5 2 9.500 7 10.500 15l1 8z" fill="#b9cbea"/><path d="M11 6.500C14 1.200 22 1.200 24 8c1 4 .2 7-1 10l-6 4c0 5-2 8.500-7 10.500-5-2-3-10-1-16.500 0-4 0-7 2-9.500z" fill="#b08959"/><ellipse cx="19.300" cy="13.600" rx="3.500" ry="5.300" fill="#ddb7a1"/><path d="M14.500 7.500C12 14 12.500 21 10 30.500c4-2 6-8 5.500-14.500-.4-4 .6-7 2.600-9z" fill="#c49b69"/><rect x="17.600" y="25" width="4" height="2.300" rx=".6" fill="#5a9372"/></svg>
<span class="t" style="left:585.2px;top:948.5px;font-size:22px;color:#2d66b3;letter-spacing:0.30px;">Ксения Письменная</span>
<span class="t" style="left:507.7px;top:1027.2px;font-size:20.6px;color:#80868e;letter-spacing:0.16px;">Выбрать поле</span>
<div class="a" style="left:508.0px;top:1047.4px;width:136px;height:2px;background:repeating-linear-gradient(90deg,#8d939b 0,#8d939b 6.5px,transparent 6.5px,transparent 11px)"></div>
<span class="t" style="left:666.7px;top:1027.2px;font-size:20.6px;color:#80868e;letter-spacing:0.35px;">Создать поле</span>
<div class="a" style="left:667.0px;top:1047.4px;width:133px;height:2px;background:repeating-linear-gradient(90deg,#8d939b 0,#8d939b 6.5px,transparent 6.5px,transparent 11px)"></div>
<span class="t" style="left:1254.3px;top:1027.2px;font-size:20.6px;color:#80868e;letter-spacing:0.25px;">Удалить раздел</span>
<div class="a" style="left:1254.0px;top:1047.4px;width:154.5px;height:2px;background:repeating-linear-gradient(90deg,#8d939b 0,#8d939b 6.5px,transparent 6.5px,transparent 11px)"></div>
<div class="a" style="left:486px;top:1098.7px;width:945px;height:560px;background:#f8fafb;border-radius:16px 16px 0 0;"></div>
<span class="t" style="left:507.9px;top:1123.4px;font-size:18.8px;color:#525c69;letter-spacing:0.40px;-webkit-text-stroke:.8px #525c69;">Б/У АВТО</span>
<span class="t" style="left:1311.9px;top:1118.6px;font-size:20.5px;color:#9a9a9a;letter-spacing:0.90px;">изменить</span>
<div class="a" style="left:508px;top:1164.8px;width:900px;height:2px;background:#e6e9ec;"></div>
<span class="t" style="left:508.9px;top:1189.7px;font-size:18.8px;color:#a8adb4;letter-spacing:-0.10px;">VIN</span>
<span class="t" style="left:507.9px;top:1220.7px;font-size:20.4px;color:#a8adb4;letter-spacing:1.25px;">не заполнено</span>
<span class="t" style="left:507.9px;top:1263.7px;font-size:18.8px;color:#a8adb4;letter-spacing:0.46px;">Марка/модель авто</span>
<span class="t" style="left:507.9px;top:1294.7px;font-size:20.4px;color:#a8adb4;letter-spacing:1.25px;">не заполнено</span>
<span class="t" style="left:507.9px;top:1337.7px;font-size:18.8px;color:#a8adb4;letter-spacing:0.43px;">Год выпуска</span>
<span class="t" style="left:507.9px;top:1368.7px;font-size:20.4px;color:#a8adb4;letter-spacing:1.25px;">не заполнено</span>
<span class="t" style="left:507.9px;top:1411.7px;font-size:18.8px;color:#a8adb4;letter-spacing:0.98px;">Пробег (км)</span>
<span class="t" style="left:507.9px;top:1442.7px;font-size:20.4px;color:#a8adb4;letter-spacing:1.25px;">не заполнено</span>
<span class="t" style="left:508.9px;top:1485.7px;font-size:18.8px;color:#a8adb4;letter-spacing:0.38px;">Тип КПП</span>
<span class="t" style="left:507.9px;top:1516.7px;font-size:20.4px;color:#a8adb4;letter-spacing:1.25px;">не заполнено</span>
<span class="t" style="left:508.9px;top:1559.7px;font-size:18.8px;color:#a8adb4;letter-spacing:0.43px;">Тип привода</span>
<span class="t" style="left:507.9px;top:1590.7px;font-size:20.4px;color:#a8adb4;letter-spacing:1.25px;">не заполнено</span>
<span class="t" style="left:508.9px;top:1633.7px;font-size:18.8px;color:#a8adb4;letter-spacing:0.48px;">Тип двигателя</span>
<span class="t" style="left:507.9px;top:1664.7px;font-size:20.4px;color:#a8adb4;letter-spacing:1.25px;">не заполнено</span>
<div class="a" style="left:1482.6px;top:300px;width:2px;height:605px;background:#dfe3e7;"></div>
<div class="a" style="left:1484px;top:295.2px;width:42px;height:1.6px;background:#dfe3e7;"></div>
<div class="a" style="left:1484px;top:449.2px;width:42px;height:1.6px;background:#dfe3e7;"></div>
<div class="a" style="left:1484px;top:592.2px;width:42px;height:1.6px;background:#dfe3e7;"></div>
<div class="a" style="left:1484px;top:758.2px;width:42px;height:1.6px;background:#dfe3e7;"></div>
<div class="a" style="left:1484px;top:901.7px;width:42px;height:1.6px;background:#dfe3e7;"></div>
<div class="a" style="left:1525px;top:262.6px;width:1232.5px;height:132.4px;background:#fff;border-radius:16px;box-shadow:0 1px 2px rgba(0,0,0,.04);"></div>
<div class="a" style="left:1525px;top:331.7px;width:1232.5px;height:1.3px;background:#e3e6ea;"></div>
<span class="t" style="left:1562.2px;top:288.4px;font-size:22px;color:#2b5bd0;letter-spacing:0.68px;">Комментарий</span>
<div class="a" style="left:1562.6px;top:331.2px;width:144.6px;height:1.9px;background:#2b5bd0;"></div>
<span class="t" style="left:1737.7px;top:288.4px;font-size:22px;color:#525c69;letter-spacing:0.27px;">Дело</span>
<span class="t" style="left:1820.2px;top:288.4px;font-size:22px;color:#525c69;letter-spacing:-0.04px;">Задача</span>
<span class="t" style="left:1924.7px;top:288.4px;font-size:22px;color:#525c69;letter-spacing:0.21px;">СМС/WhatsApp</span>
<span class="t" style="left:2114.7px;top:288.4px;font-size:22px;color:#525c69;letter-spacing:0.26px;">Письмо</span>
<span class="t" style="left:2226.2px;top:288.4px;font-size:22px;color:#525c69;letter-spacing:0.27px;">Zoom</span>
<span class="t" style="left:2312.7px;top:288.4px;font-size:22px;color:#525c69;letter-spacing:0.26px;">Маркет</span>
<span class="t" style="left:2419.7px;top:288.4px;font-size:22px;color:#525c69;letter-spacing:-0.85px;">Еще</span>
<svg class="a" style="left:2476px;top:296.5px;" width="14" height="9.5" viewBox="0 0 14 9.5"><path d="M1.500 1.500l5.500 5.500 5.500-5.500" fill="none" stroke="#525c69" stroke-width="2.300"/></svg>
<span class="t" style="left:1549.1px;top:351.5px;font-size:20.6px;color:#ababab;letter-spacing:0.41px;">Оставьте комментарий</span>
<div class="a" style="left:1459px;top:272px;width:48px;height:48px;background:#5bc1f0;border-radius:24px;box-shadow:0 1px 2px rgba(0,0,0,.12);"></div>
<svg class="a" style="left:1472.5px;top:287px;" width="21.5" height="19" viewBox="0 0 21.5 19"><path d="M2 0h17.500a2 2 0 0 1 2 2v10.500a2 2 0 0 1-2 2H17v4l-5.200-4H2a2 2 0 0 1-2-2V2a2 2 0 0 1 2-2z" fill="#fff"/></svg>
<div class="a" style="left:1525px;top:417.2px;width:1232.5px;height:64px;background:#f6f7f9;border-radius:32px;box-shadow:0 1.500px 1px rgba(0,0,0,.06);"></div>
<svg class="a" style="left:1543.5px;top:433.5px;border-radius:50%;overflow:hidden;" width="32.5" height="32.5" viewBox="0 0 40 40"><rect width="40" height="40" fill="#1d1e22"/><rect x="0" y="0" width="40" height="6.2" fill="#c9d6e8"/><rect x="0" y="8.6" width="40" height="1.5" fill="#dde5ee"/><rect x="0" y="11.6" width="40" height="1.4" fill="#cfd8e4"/><rect x="22" y="14.2" width="18" height="1.1" fill="#8c949f"/><path d="M32.500 15L40 10v21l-4.500-5z" fill="#b3c2d8"/><rect x="0" y="26" width="8" height="1.600" fill="#cbd5e2"/><path d="M4.500 40C5 30 8 24.500 14 22.500l6-2.500c1.500-4 4-5 5.500-3 5 2 9.500 7 10.500 15l1 8z" fill="#b9cbea"/><path d="M11 6.500C14 1.200 22 1.200 24 8c1 4 .2 7-1 10l-6 4c0 5-2 8.500-7 10.500-5-2-3-10-1-16.500 0-4 0-7 2-9.500z" fill="#b08959"/><ellipse cx="19.300" cy="13.600" rx="3.500" ry="5.300" fill="#ddb7a1"/><path d="M14.500 7.500C12 14 12.500 21 10 30.500c4-2 6-8 5.500-14.500-.4-4 .6-7 2.600-9z" fill="#c49b69"/><rect x="17.600" y="25" width="4" height="2.300" rx=".6" fill="#5a9372"/></svg>
<div class="a" style="left:1565.4px;top:433.2px;width:32.3px;height:32.3px;background:#fff;border-radius:17px;box-shadow:0 1px 2px rgba(0,0,0,.12);"></div>
<div class="a" style="left:1574px;top:448px;width:15.4px;height:2.8px;background:#4fb9ea;"></div>
<div class="a" style="left:1580.3px;top:441.7px;width:2.8px;height:15.4px;background:#4fb9ea;"></div>
<span class="t" style="left:1608.2px;top:439.6px;font-size:21.8px;color:#333;letter-spacing:0.64px;">Пригласить к обсуждению</span>
<div class="a" style="left:1459px;top:426px;width:48px;height:48px;background:#a3cc3a;border-radius:24px;box-shadow:0 1px 2px rgba(0,0,0,.12);"></div>
<svg class="a" style="left:1472px;top:439px;" width="22" height="21.5" viewBox="0 0 22 21.5"><path d="M3.500 1.400h15a2.200 2.200 0 0 1 2.200 2.200v8.600a2.200 2.200 0 0 1-2.200 2.200H10l-4.500 4.200v-4.200H3.500a2.200 2.200 0 0 1-2.200-2.200V3.600a2.200 2.200 0 0 1 2.200-2.200z" fill="none" stroke="#fff" stroke-width="2.600" stroke-linejoin="round"/></svg>
<div class="a" style="left:1484px;top:518.7px;width:1273.5px;height:1.6px;background:#e1e4e8;"></div>
<div class="a" style="left:2026px;top:504px;width:229.6px;height:32.7px;background:#a3cc3a;border-radius:17px;"></div>
<span class="t" style="left:2048.6px;top:512.7px;font-size:19.6px;color:#fff;letter-spacing:0.78px;-webkit-text-stroke:.8px #fff;">Что нужно сделать</span>
<div class="a" style="left:1525px;top:560.5px;width:1232.5px;height:84.3px;background:#fefdee;border-radius:16px;box-shadow:0 1px 2px rgba(0,0,0,.04);"></div>
<div class="a" style="left:1548.9px;top:586.7px;width:32.4px;height:32.4px;background:#a3cc3a;border-radius:17px;"></div>
<div class="a" style="left:1556px;top:601.6px;width:18px;height:2.4px;background:#fff;"></div>
<div class="a" style="left:1563.8px;top:593.8px;width:2.4px;height:18px;background:#fff;"></div>
<span class="t" style="left:1600.3px;top:577.3px;font-size:21.8px;color:#333;letter-spacing:0.34px;">Создайте дело</span>
<span class="t" style="left:1600.3px;top:606.7px;font-size:20.4px;color:#a8adb4;letter-spacing:0.41px;">Запланируйте следующий шаг, чтобы не забыть о важном</span>
<div class="a" style="left:1459px;top:569px;width:48px;height:48px;background:#a3cc3a;border-radius:24px;box-shadow:0 1px 2px rgba(0,0,0,.12);"></div>
<svg class="a" style="left:1476px;top:580px;" width="14" height="26" viewBox="0 0 14 26"><circle cx="7" cy="3.600" r="3.300" fill="#fff"/><path d="M2 9.500h8.500v12H13v3.500H1v-3.500h3.500V13H2z" fill="#fff"/></svg>
<div class="a" style="left:1484px;top:682.2px;width:1273.5px;height:1.6px;background:#dfe3e7;"></div>
<div class="a" style="left:2089px;top:666.8px;width:104px;height:33px;background:#e2e6ea;border-radius:17px;"></div>
<span class="t" style="left:2112.2px;top:675.9px;font-size:19.2px;color:#525c69;letter-spacing:0.70px;-webkit-text-stroke:.8px #525c69;">Вчера</span>
<div class="a" style="left:2613px;top:667px;width:144.8px;height:31.5px;background:#f8fafb;border-radius:16px;"></div>
<svg class="a" style="left:2628px;top:675.5px;" width="16" height="15" viewBox="0 0 16 15"><path d="M0.500 0.500h15l-5.700 6.800v6.700l-3.600-2V7.300z" fill="#a8adb4"/></svg>
<span class="t" style="left:2654.2px;top:675.5px;font-size:18.2px;color:#a8adb4;letter-spacing:1.56px;-webkit-text-stroke:.8px #a8adb4;">ФИЛЬТР</span>
<div class="a" style="left:1525px;top:724.6px;width:1232.5px;height:120.3px;background:#f8fafb;border-radius:16px;border:2px solid #e3e6ea;box-sizing:border-box;"></div>
<div class="a" style="left:1460.5px;top:734.7px;width:49px;height:49px;background:#fff;border-radius:25px;"></div>
<svg class="a" style="left:1474.5px;top:749px;" width="23" height="19" viewBox="0 0 23 19"><path d="M2.500 0h13a3 3 0 0 1 2.300 1.100l5 7a2.400 2.400 0 0 1 0 2.800l-5 7a3 3 0 0 1-2.300 1.100h-13A2.500 2.500 0 0 1 0 16.500v-14A2.500 2.500 0 0 1 2.500 0z" fill="#c3c7cd"/></svg>
<span class="t" style="left:1551.9px;top:749.0px;font-size:20.3px;font-weight:700;color:#a8adb4;letter-spacing:-0.23px;">Стадия изменена</span>
<span class="t" style="left:1740.1px;top:748.7px;font-size:20.3px;color:#b9bec4;letter-spacing:-0.55px;">15:34</span>
<div class="a" style="left:1551px;top:784px;width:182.6px;height:32px;background:#e9ebee;border-radius:16px;"></div>
<span class="t" style="left:1563.7px;top:790.7px;font-size:18.9px;color:#525c69;letter-spacing:0.29px;">Заявка на оценку</span>
<svg class="a" style="left:1741.5px;top:795px;" width="12" height="10" viewBox="0 0 12 10"><path d="M0 5h10M6.500 1.500L10.500 5 6.500 8.500" fill="none" stroke="#b4b9c0" stroke-width="1.500"/></svg>
<div class="a" style="left:1763px;top:784px;width:140.8px;height:32px;background:#e9ebee;border-radius:16px;"></div>
<span class="t" style="left:1775.2px;top:790.7px;font-size:18.9px;color:#525c69;letter-spacing:0.58px;">Диагностика</span>
<svg class="a" style="left:2701.7px;top:743.7px;border-radius:50%;overflow:hidden;opacity:.5;" width="30.6" height="30.6" viewBox="0 0 40 40"><rect width="40" height="40" fill="#1d1e22"/><rect x="0" y="0" width="40" height="6.2" fill="#c9d6e8"/><rect x="0" y="8.6" width="40" height="1.5" fill="#dde5ee"/><rect x="0" y="11.6" width="40" height="1.4" fill="#cfd8e4"/><rect x="22" y="14.2" width="18" height="1.1" fill="#8c949f"/><path d="M32.500 15L40 10v21l-4.500-5z" fill="#b3c2d8"/><rect x="0" y="26" width="8" height="1.600" fill="#cbd5e2"/><path d="M4.500 40C5 30 8 24.500 14 22.500l6-2.500c1.500-4 4-5 5.500-3 5 2 9.500 7 10.500 15l1 8z" fill="#b9cbea"/><path d="M11 6.500C14 1.200 22 1.200 24 8c1 4 .2 7-1 10l-6 4c0 5-2 8.500-7 10.500-5-2-3-10-1-16.500 0-4 0-7 2-9.500z" fill="#b08959"/><ellipse cx="19.300" cy="13.600" rx="3.500" ry="5.300" fill="#ddb7a1"/><path d="M14.500 7.500C12 14 12.500 21 10 30.500c4-2 6-8 5.500-14.500-.4-4 .6-7 2.600-9z" fill="#c49b69"/><rect x="17.600" y="25" width="4" height="2.300" rx=".6" fill="#5a9372"/></svg>
<div class="a" style="left:1525px;top:868px;width:1232.5px;height:107.8px;background:#f8fafb;border-radius:16px;border:2px solid #e3e6ea;box-sizing:border-box;"></div>
<div class="a" style="left:1460.5px;top:878px;width:49px;height:49px;background:#fff;border-radius:25px;"></div>
<svg class="a" style="left:1480px;top:889.5px;" width="11" height="25" viewBox="0 0 11 25"><circle cx="5.500" cy="3" r="2.900" fill="#c3c7cd"/><path d="M1 8.500h7v11.500h2.500v3.500H0.500v-3.500H3.200V12H1z" fill="#c3c7cd"/></svg>
<span class="t" style="left:1551.9px;top:891.8px;font-size:20.3px;font-weight:700;color:#a8adb4;letter-spacing:-0.13px;">Создан элемент</span>
<span class="t" style="left:1728.7px;top:891.8px;font-size:20.3px;color:#b9bec4;letter-spacing:-0.43px;">14:03</span>
<span class="t" style="left:1552.2px;top:928.0px;font-size:22px;color:#333;letter-spacing:-0.44px;">тест 1</span>
<svg class="a" style="left:2701.7px;top:887px;border-radius:50%;overflow:hidden;opacity:.5;" width="30.6" height="30.6" viewBox="0 0 40 40"><rect width="40" height="40" fill="#1d1e22"/><rect x="0" y="0" width="40" height="6.2" fill="#c9d6e8"/><rect x="0" y="8.6" width="40" height="1.5" fill="#dde5ee"/><rect x="0" y="11.6" width="40" height="1.4" fill="#cfd8e4"/><rect x="22" y="14.2" width="18" height="1.1" fill="#8c949f"/><path d="M32.500 15L40 10v21l-4.500-5z" fill="#b3c2d8"/><rect x="0" y="26" width="8" height="1.600" fill="#cbd5e2"/><path d="M4.500 40C5 30 8 24.500 14 22.500l6-2.500c1.500-4 4-5 5.500-3 5 2 9.500 7 10.500 15l1 8z" fill="#b9cbea"/><path d="M11 6.500C14 1.200 22 1.200 24 8c1 4 .2 7-1 10l-6 4c0 5-2 8.500-7 10.500-5-2-3-10-1-16.500 0-4 0-7 2-9.500z" fill="#b08959"/><ellipse cx="19.300" cy="13.600" rx="3.500" ry="5.300" fill="#ddb7a1"/><path d="M14.500 7.500C12 14 12.500 21 10 30.500c4-2 6-8 5.500-14.500-.4-4 .6-7 2.600-9z" fill="#c49b69"/><rect x="17.600" y="25" width="4" height="2.300" rx=".6" fill="#5a9372"/></svg>
<div class="a" style="left:2781px;top:0px;width:2px;height:1640px;background:#dfe3e7;"></div>
<div class="a" style="left:2807px;top:23px;width:47.7px;height:47.5px;background:#d9dde2;border-radius:9px;"></div>
<div class="a" style="left:2820px;top:35.5px;width:22.5px;height:22.5px;background:#525c69;border-radius:12px;"></div>
<span class="t" style="left:2825.8px;top:39.3px;font-size:18px;font-weight:700;color:#d9dde2;">?</span>
<div class="a" style="left:2799px;top:95px;width:65px;height:1.5px;background:#e3e6ea;"></div>
<div class="a" style="left:2799px;top:258.5px;width:65px;height:1.5px;background:#e3e6ea;"></div>
<div class="a" style="left:2799px;top:316px;width:65px;height:1.5px;background:#e3e6ea;"></div>
<div class="a" style="left:2806px;top:117.5px;width:51px;height:51px;background:#e1e5e9;border-radius:26px;"></div>
<svg class="a" style="left:2820px;top:130px;" width="23" height="26" viewBox="0 0 23 26"><path d="M11.500 0.500a2 2 0 0 1 2 2v.600c3.500.900 5.700 3.900 5.700 7.600v5l2.600 3.300v1.500H1.200V19l2.600-3.300v-5c0-3.700 2.200-6.700 5.700-7.600V2.500a2 2 0 0 1 2-2z" fill="#525c69"/><path d="M8.800 22.500h5.400a2.700 2.700 0 0 1-5.400 0z" fill="#525c69"/></svg>
<div class="a" style="left:2839px;top:118px;width:24.5px;height:19.3px;background:#ee5f4c;border-radius:10px;"></div>
<span class="t" style="left:2846.2px;top:120.6px;font-size:16.5px;font-weight:700;color:#fff;">1</span>
<div class="a" style="left:2806px;top:186.5px;width:51px;height:51px;background:#e1e5e9;border-radius:26px;"></div>
<svg class="a" style="left:2818px;top:198.5px;" width="28" height="28" viewBox="0 0 25 25"><path d="M12.500 1.800a10.700 10.700 0 1 0 6.400 19.300l4.100 1.500-1.300-4A10.700 10.700 0 0 0 12.500 1.800z" fill="none" stroke="#525c69" stroke-width="2.600"/><path d="M7 9.700h11M7 9.700l2.800-2.400M7 9.700l2.800 2.400M18 15.300H7M18 15.300l-2.800-2.400M18 15.300l-2.800 2.400" stroke="#525c69" stroke-width="1.800" fill="none"/></svg>
<svg class="a" style="left:2819px;top:278px;" width="28" height="26" viewBox="0 0 28 26"><circle cx="10.500" cy="10.500" r="8" fill="none" stroke="#525c69" stroke-width="2.800"/><path d="M16.500 16l9.500 8.500" stroke="#525c69" stroke-width="3.200" stroke-linecap="round"/></svg>
<svg class="a" style="left:2806px;top:337.5px;border-radius:50%;overflow:hidden;" width="50" height="50" viewBox="0 0 50 50"><circle cx="25" cy="25" r="25" fill="#fbfbfc"/><path d="M13 27C9 17 13 5 24 4c11-1 19 5 19 15 1 6 2 9 6 11-5 4-12 3-15-2-5 6-16 8-27 3 4-1 5-2 6-4z" fill="#e3ae4c"/><path d="M15 26c-2-9 1-19 10-20 9-1 16 5 16 13 0 5 2 8 5 10-4 2-9 1-11-3-4 6-14 7-22 4 1-1 2-2 2-4z" fill="#f0c665"/><path d="M17 21c0-8 4-12 10-12s9 5 9 11-4 13-9 13-10-5-10-12z" fill="#f6d6c2"/><path d="M16 18c2-6 8-9 14-7 3 1 5 3 6 6-4-3-9-4-13-2-3 1-5 2-7 3z" fill="#e9b853"/><ellipse cx="22.500" cy="20.500" rx="1.700" ry="1.300" fill="#5b4a52"/><ellipse cx="30.500" cy="19.500" rx="1.700" ry="1.300" fill="#5b4a52"/><path d="M24.500 27.500c2 .8 4 .3 5.500-1.200-.5 2.500-4 3.500-5.500 1.200z" fill="#c9404a"/><path d="M13 50c1-8 5-12 10-14l6 3 5-4c5 1 8 5 9 15z" fill="#fdf1f3"/><path d="M13 50c1-7 4-11 8-13l5 13z" fill="#6970c4"/><path d="M32 50l2-14c3 1 5 3 6 6l-2 8z" fill="#e9cdd6"/><path d="M26 50l5-12 3 1-2 11z" fill="#6970c4"/><path d="M21.500 36.500l4 2.500 4-3 -.5 5-3.500-1.500-3.500 2z" fill="#d9434b"/></svg>
<svg class="a" style="left:2806px;top:409.5px;opacity:.95;" width="50" height="50" viewBox="0 0 50 50"><ellipse cx="23.800" cy="27" rx="16.600" ry="21.500" fill="#dcbdab"/><path d="M6.800 27C4 12 11 3.500 24 3.500S43 11 40.800 26c-1-5-2.500-8-4.500-10-2 1-4 1.500-7 1.500 1-1.500 1.500-3 1.500-4.500-3 4-9 7-17 7.500-3 1.500-5 4-6 6.500z" fill="#6a5946"/><path d="M12 24c2-1.300 5-1.500 7-.5M28 23.500c2-1 5-1 7 .3" stroke="#6b5848" stroke-width="1.600" fill="none"/><ellipse cx="16" cy="26.500" rx="2.200" ry="1.200" fill="#7d8792"/><ellipse cx="31.500" cy="26.500" rx="2.200" ry="1.200" fill="#7d8792"/><path d="M22 27v8.500h4" stroke="#c09f8c" stroke-width="1.400" fill="none"/><path d="M18.500 40.500c3.500-1.200 7-1.200 10.500 0" stroke="#b98778" stroke-width="1.800" fill="none"/><path d="M9 36c2 8 8 12.500 15 12.500S37 44 39 36c-3 5-8 7-15 7S12 41 9 36z" fill="#ceac99"/></svg>
<svg class="a" style="left:2805.5px;top:475.5px;border-radius:50%;overflow:hidden;opacity:.8;" width="51" height="51" viewBox="0 0 40 40"><rect width="40" height="40" fill="#1d1e22"/><rect x="0" y="0" width="40" height="6.2" fill="#c9d6e8"/><rect x="0" y="8.6" width="40" height="1.5" fill="#dde5ee"/><rect x="0" y="11.6" width="40" height="1.4" fill="#cfd8e4"/><rect x="22" y="14.2" width="18" height="1.1" fill="#8c949f"/><path d="M32.500 15L40 10v21l-4.500-5z" fill="#b3c2d8"/><rect x="0" y="26" width="8" height="1.600" fill="#cbd5e2"/><path d="M4.500 40C5 30 8 24.500 14 22.500l6-2.500c1.500-4 4-5 5.500-3 5 2 9.500 7 10.500 15l1 8z" fill="#b9cbea"/><path d="M11 6.500C14 1.200 22 1.200 24 8c1 4 .2 7-1 10l-6 4c0 5-2 8.500-7 10.500-5-2-3-10-1-16.500 0-4 0-7 2-9.500z" fill="#b08959"/><ellipse cx="19.300" cy="13.600" rx="3.500" ry="5.300" fill="#ddb7a1"/><path d="M14.500 7.500C12 14 12.500 21 10 30.500c4-2 6-8 5.500-14.500-.4-4 .6-7 2.600-9z" fill="#c49b69"/><rect x="17.600" y="25" width="4" height="2.300" rx=".6" fill="#5a9372"/></svg>
</div>
</body></html>
